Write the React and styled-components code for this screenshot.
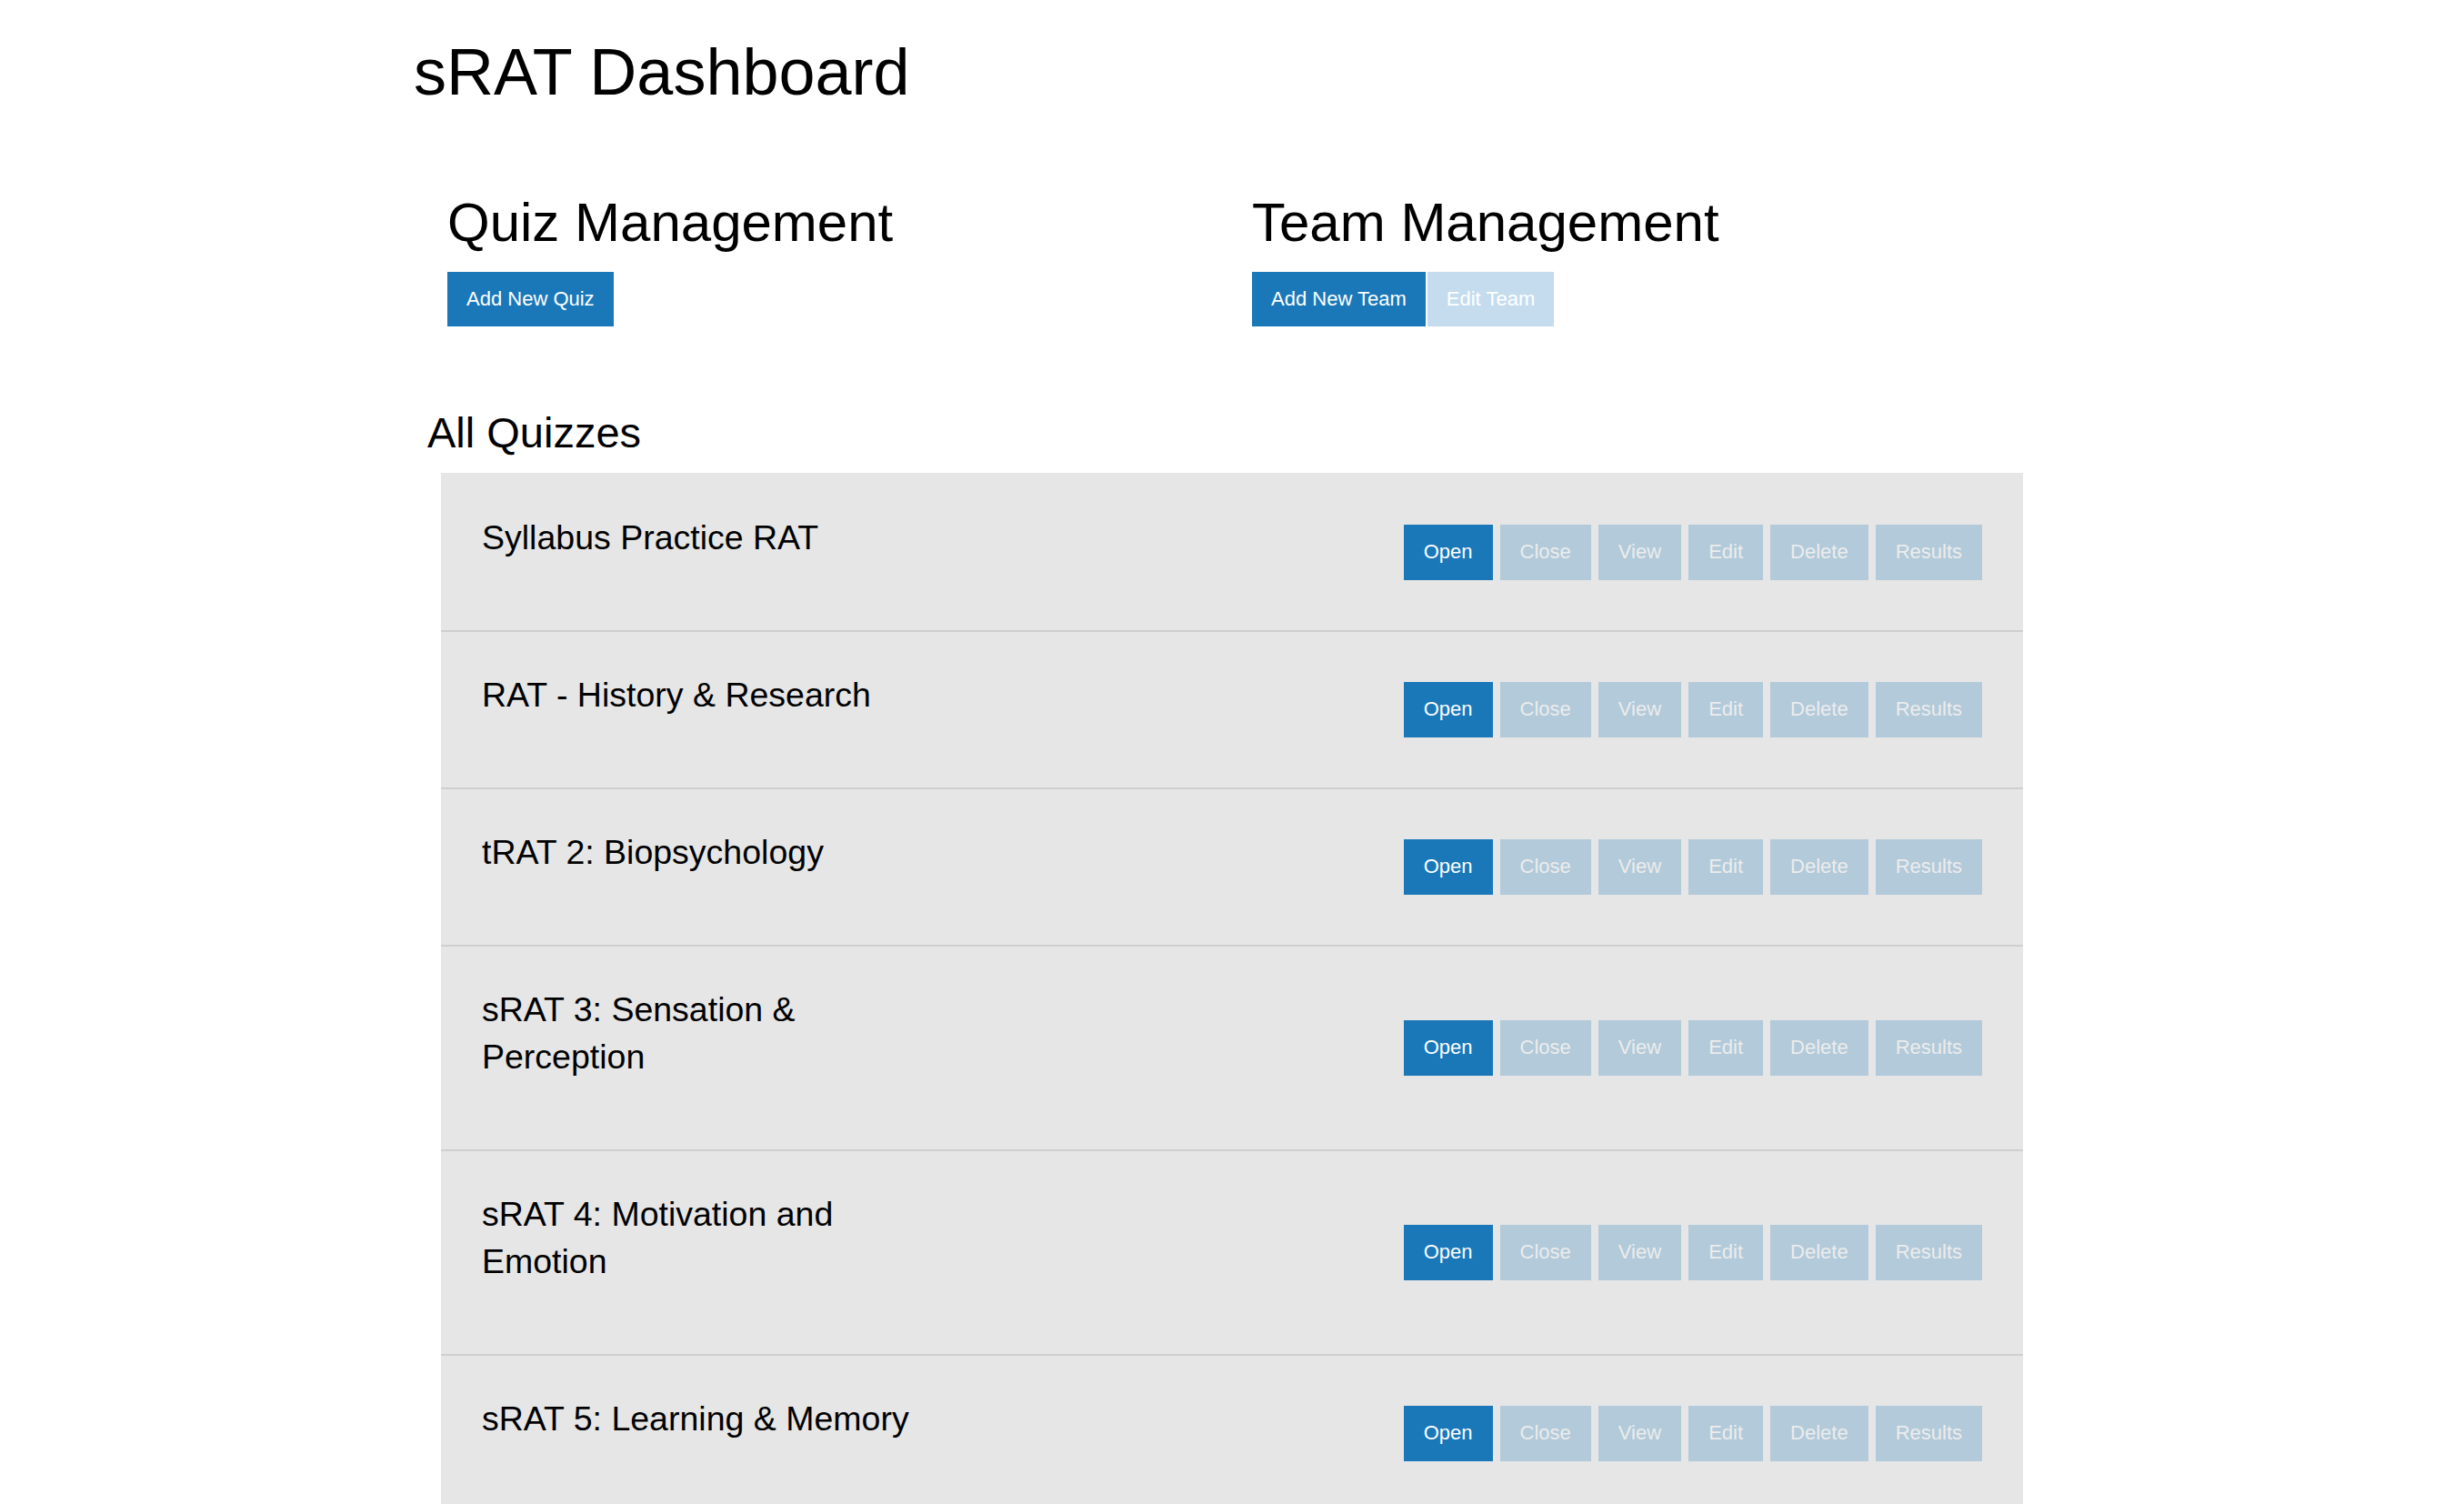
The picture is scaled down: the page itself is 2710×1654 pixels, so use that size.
import React from 'react';
import styled, { createGlobalStyle } from 'styled-components';

const GlobalStyle = createGlobalStyle`
  html, body {
    margin: 0;
    padding: 0;
    background: #fff;
  }
  body {
    font-family: 'Liberation Sans', Arial, Helvetica, sans-serif;
    color: #000;
  }
`;

const Page = styled.div`
  width: 1800px;
  margin: 0 auto;
`;

const PageTitle = styled.h1`
  margin: 40px 0 0;
  font-size: 72px;
  font-weight: 400;
  line-height: 1.1;
`;

const ManageGrid = styled.div`
  display: grid;
  grid-template-columns: 885px 885px;
  padding-left: 37px;
  margin-top: 93px;
`;

const SectionTitle = styled.h2`
  margin: 0 0 21px;
  font-size: 60px;
  font-weight: 400;
  line-height: 1.1;
`;

const ButtonBar = styled.div`
  display: flex;
  align-items: center;
  gap: ${(p) => p.$gap || 0}px;
`;

const Button = styled.button`
  height: ${(p) => (p.$tall ? 61 : 60)}px;
  padding: 0 ${(p) => (p.$tall ? 22 : 21)}px;
  border: 0;
  border-radius: 0;
  background: #1a78b9;
  color: #fff;
  font-family: 'Liberation Sans', Arial, sans-serif;
  font-size: 22px;
  white-space: nowrap;
  opacity: ${(p) => (p.disabled ? 0.25 : 1)};
  cursor: ${(p) => (p.disabled ? 'not-allowed' : 'pointer')};
`;

const ListTitle = styled.h3`
  margin: 91px 0 18px;
  padding-left: 15px;
  font-size: 47px;
  font-weight: 400;
  line-height: 1.1;
`;

const QuizPanel = styled.div`
  margin: 0 30px;
  background: #e6e6e6;
`;

const QuizRow = styled.div`
  display: flex;
  align-items: center;
  justify-content: space-between;
  padding: 0 45px;
  border-top: 2px solid #cfcfcf;
  &:first-child {
    border-top-color: transparent;
  }
`;

const QuizName = styled.div`
  align-self: flex-start;
  width: 490px;
  margin: 43px 0 76px;
  font-size: 37.5px;
  line-height: 52px;
`;

const quizzes = [
  'Syllabus Practice RAT',
  'RAT - History & Research',
  'tRAT 2: Biopsychology',
  'sRAT 3: Sensation & Perception',
  'sRAT 4: Motivation and Emotion',
  'sRAT 5: Learning & Memory',
];

const actions = ['Open', 'Close', 'View', 'Edit', 'Delete', 'Results'];

const App = () => {
  return (
    <Page>
      <GlobalStyle />
      <PageTitle>sRAT Dashboard</PageTitle>

      <ManageGrid>
        <div>
          <SectionTitle>Quiz Management</SectionTitle>
          <ButtonBar>
            <Button>Add New Quiz</Button>
          </ButtonBar>
        </div>
        <div>
          <SectionTitle>Team Management</SectionTitle>
          <ButtonBar $gap={2}>
            <Button>Add New Team</Button>
            <Button disabled>Edit Team</Button>
          </ButtonBar>
        </div>
      </ManageGrid>

      <ListTitle>All Quizzes</ListTitle>
      <QuizPanel>
        {quizzes.map((name) => (
          <QuizRow key={name}>
            <QuizName>{name}</QuizName>
            <ButtonBar $gap={8}>
              {actions.map((a) => (
                <Button key={a} $tall disabled={a !== 'Open'}>
                  {a}
                </Button>
              ))}
            </ButtonBar>
          </QuizRow>
        ))}
      </QuizPanel>
    </Page>
  );
};

export default App;
